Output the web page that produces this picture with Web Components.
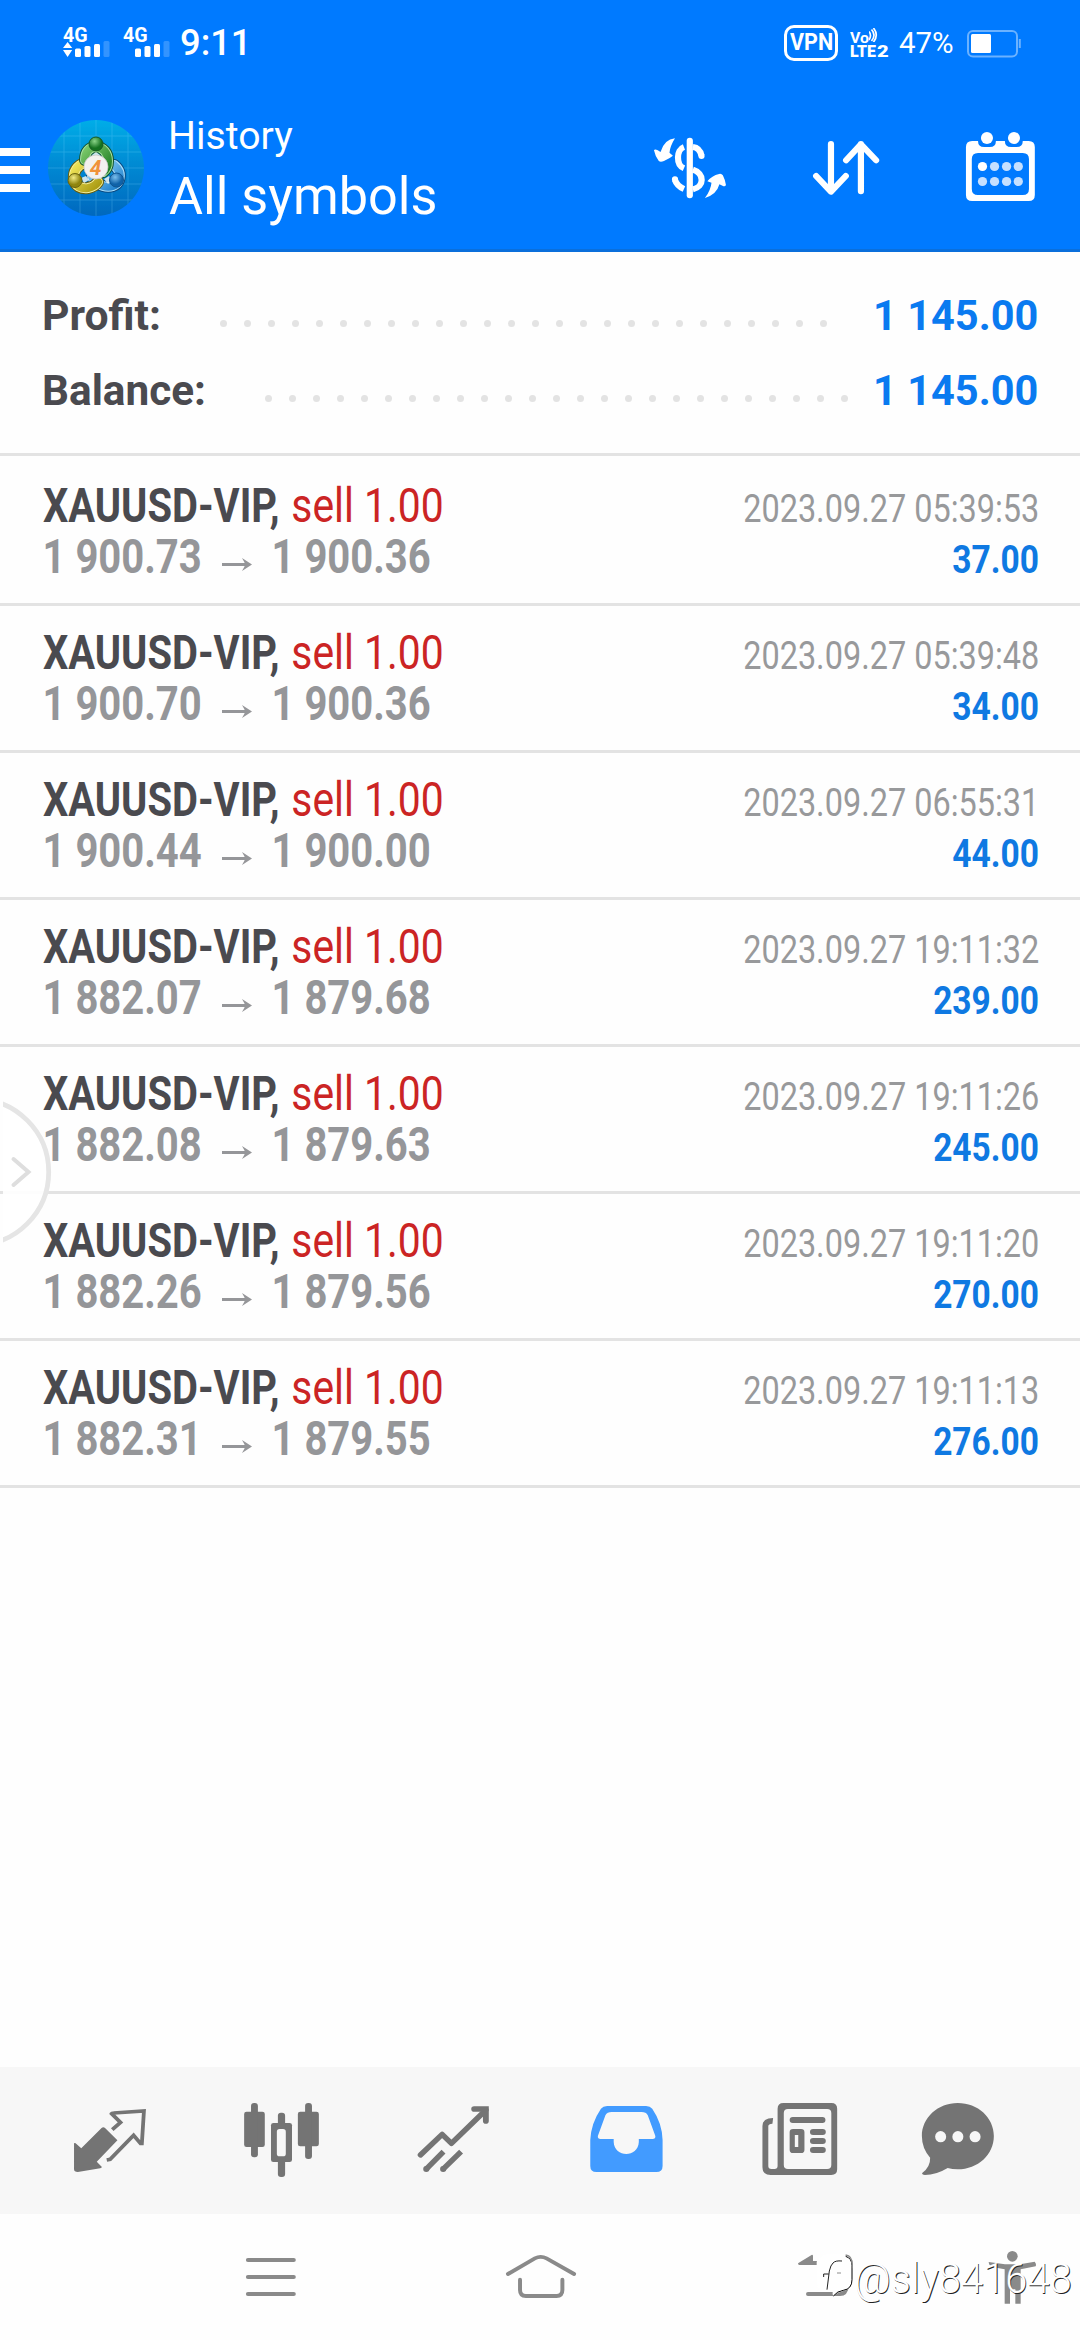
<!DOCTYPE html>
<html lang="en">
<head>
<meta charset="utf-8">
<title>History</title>
<style>
html,body{margin:0;padding:0;background:#fefefe}
body{width:1080px;height:2340px;overflow:hidden;font-family:Roboto,"Liberation Sans",sans-serif}
</style>
</head>
<body>
<history-app></history-app>
<script>
const FAMILY = 'Roboto, "Liberation Sans", sans-serif';
const pen = document.createElement('canvas').getContext('2d');

class BaseElement extends HTMLElement {
  render(html) {
    if (!this.shadowRoot) this.attachShadow({mode: 'open'});
    this.shadowRoot.innerHTML = html;
  }
}

/* A single line of text, scaled so that its ink (or that of the "like" sample) spans the given width. */
class FitText extends BaseElement {
  connectedCallback() {
    const w = +this.getAttribute('w'), size = this.getAttribute('size');
    const weight = this.getAttribute('weight') || 400, lh = this.getAttribute('lh') || size;
    const text = this.getAttribute('text');
    pen.font = `${weight} ${size}px ${FAMILY}`;
    const m = pen.measureText(this.getAttribute('like') || text);
    const k = w / (m.actualBoundingBoxLeft + m.actualBoundingBoxRight);
    this.render(`<style>
      :host{display:block;flex:none;width:${w}px;height:${lh}px;white-space:pre}
      span{display:inline-block;font:${weight} ${size}px/${lh}px ${FAMILY};transform-origin:0 0;
        transform:translateX(${m.actualBoundingBoxLeft * k}px) scaleX(${k})}
    </style><span></span>`);
    this.shadowRoot.querySelector('span').textContent = text;
  }
}
customElements.define('fit-text', FitText);

class StatusBar extends BaseElement {
  connectedCallback() {
    this.render(`<style>
      :host{display:flex;height:84px;padding:0 58.500px 0 63px;color:#fff;align-items:flex-start}
      .sig{position:relative;width:46px;height:30px;margin:28px 14px 0 0}
      .sig fit-text{position:absolute;left:0;top:-3px}
      .sig svg{display:block}
      .time{margin:24px auto 0 -2px}
      .vpn{box-sizing:border-box;width:54px;height:36px;border:3px solid #fff;border-radius:10px;display:flex;justify-content:center;align-items:center;margin-top:25px}
      .lte{display:flex;flex-direction:column;margin:28px 0 0 12px;width:38px;gap:0}
      .lte div{display:flex;height:14px;gap:1px;align-items:flex-start}
      .pct{margin:24px 14px 0 11px}
      .bat{margin-top:30px}
    </style>
    <div class="sig"><fit-text text="4G" w="24" size="20" weight="700" lh="20"></fit-text>
      <svg width="48" height="30" fill="#fff"><path d="M0 20l4.6-6 4.6 6zM0 22h9.2l-4.600 7z"/><rect x="12" y="20.500" width="6" height="8.500" rx="1.500"/><rect x="21.500" y="18" width="6" height="11" rx="1.500"/><rect x="31" y="16" width="6" height="13" rx="1.500"/><rect x="40.500" y="13" width="6" height="16" rx="1.500" opacity=".2"/></svg></div>
    <div class="sig"><fit-text text="4G" w="24" size="20" weight="700" lh="20"></fit-text>
      <svg width="48" height="30" fill="#fff"><rect x="12" y="20.500" width="6" height="8.500" rx="1.500"/><rect x="21.500" y="18" width="6" height="11" rx="1.500"/><rect x="31" y="16" width="6" height="13" rx="1.500"/><rect x="40.500" y="13" width="6" height="16" rx="1.500" opacity=".2"/></svg></div>
    <fit-text class="time" text="9:11" w="64" size="36" weight="500" lh="38"></fit-text>
    <div class="vpn"><fit-text text="VPN" w="42" size="23" weight="700" lh="24"></fit-text></div>
    <div class="lte"><div><fit-text text="Vo" w="18.500" size="15" weight="700" lh="14"></fit-text>
      <svg width="9" height="14" fill="none" stroke="#fff" stroke-width="1.700"><path d="M0 3.500q3 4 0 8.500M2.500 1.500q5 5.500 0 11.500M4.500 0q5.500 7 0 14"/></svg></div>
      <div><fit-text text="LTE" w="26" size="16" weight="900" lh="14"></fit-text><fit-text text="2" w="11" size="16.500" weight="900" lh="14"></fit-text></div></div>
    <fit-text class="pct" text="47%" w="54" size="29.500" lh="38"></fit-text>
    <svg class="bat" width="55" height="28"><rect x="1" y="1" width="49" height="25.500" rx="5" fill="none" stroke="#fff" stroke-width="2" opacity=".42"/><rect x="4" y="4" width="20" height="19" rx="1.500" fill="#fff"/><path d="M52.800 9v9" stroke="#fff" stroke-width="2" opacity=".42"/></svg>`);
  }
}
customElements.define('status-bar', StatusBar);

class AppLogo extends BaseElement {
  connectedCallback() {
    const arm = (d, dark, light, fill) => `<path d="${d}" stroke="${dark}" stroke-width="12"/><path d="${d}" stroke="${light}" stroke-width="10"/><path d="${d}" stroke="url(#${fill})" stroke-width="8"/>`;
    this.render(`<style>:host{display:block;width:98px;height:98px}svg{display:block}</style>
    <svg width="98" height="98" viewBox="0 0 98 98">
      <defs>
        <linearGradient id="sky" x1="0" y1="0" x2="0" y2="1"><stop offset="0" stop-color="#00aee8"/><stop offset=".5" stop-color="#0088d2"/><stop offset="1" stop-color="#0068be"/></linearGradient>
        <linearGradient id="g" x1="0" y1="0" x2="1" y2="1"><stop offset="0" stop-color="#7cc96a"/><stop offset="1" stop-color="#1f7d25"/></linearGradient>
        <linearGradient id="y" x1="0" y1="0" x2="1" y2="1"><stop offset="0" stop-color="#f3e75c"/><stop offset="1" stop-color="#a99a12"/></linearGradient>
        <linearGradient id="b" x1="0" y1="0" x2="1" y2="1"><stop offset="0" stop-color="#8fd3f8"/><stop offset="1" stop-color="#1e80cd"/></linearGradient>
        <radialGradient id="gh" cx=".4" cy=".3"><stop offset="0" stop-color="#8ad487"/><stop offset="1" stop-color="#157220"/></radialGradient>
        <radialGradient id="yh" cx=".4" cy=".3"><stop offset="0" stop-color="#f3eb86"/><stop offset="1" stop-color="#8f840e"/></radialGradient>
        <radialGradient id="bh" cx=".4" cy=".3"><stop offset="0" stop-color="#7cc0ee"/><stop offset="1" stop-color="#0f62a8"/></radialGradient>
        <clipPath id="c"><circle cx="49" cy="49" r="48"/></clipPath>
      </defs>
      <g clip-path="url(#c)"><rect width="98" height="98" fill="url(#sky)"/>
      <path d="M17 0v98M33 0v98M49 0v98M65 0v98M81 0v98M0 17h98M0 33h98M0 49h98M0 65h98M0 81h98" stroke="#7fd4ff" stroke-width=".8" opacity=".3"/></g>
      <g fill="none" stroke-linecap="round">
        ${arm('M67 46c5 4 7 9 5 15s-9 8-16 6-10-5-11-10', '#0b4a82', '#abe0fb', 'b')}
        ${arm('M38 44c-8 2-12 9-11 16s7 10 14 9c5-1 8-3 10-6', '#655d0c', '#f4ee9c', 'y')}
        ${arm('M38 41C38 33 42 28 49 28s12 6 12 14c0 5-2 9-5 11', '#12532b', '#a6dfa2', 'g')}
      </g>
      <path d="M45 36L49 33L53 36V38H45ZM34 59L39 57L42 61L37 64ZM57 60L62 57L65 62L61 65Z" fill="#eef6f4" opacity=".85"/>
      <circle cx="49" cy="25" r="7" fill="url(#gh)" stroke="#165a24"/>
      <circle cx="28" cy="61.500" r="7" fill="url(#yh)" stroke="#6d650f"/>
      <circle cx="69.500" cy="61" r="7" fill="url(#bh)" stroke="#0f5490"/>
      <circle cx="49" cy="48" r="12" fill="#f3f1f0" stroke="#c8c8c8" stroke-width=".8"/>
      <text x="48.500" y="55.500" text-anchor="middle" font-family="Roboto,sans-serif" font-style="italic" font-weight="700" font-size="21" fill="#f0923a">4</text>
    </svg>`);
  }
}
customElements.define('app-logo', AppLogo);

class AppBar extends BaseElement {
  connectedCallback() {
    this.render(`<style>
      :host{display:flex;height:165px;border-bottom:3px solid #0a6fdb;color:#fff;align-items:flex-start}
      svg{display:block;flex:none}
      .menu{margin-top:64px}
      app-logo{margin:35px 0 0 17px}
      .titles{display:flex;flex-direction:column;margin:29px auto 0 26px}
      .titles fit-text+fit-text{margin:8px 0 0 -2.500px}
      .acts{display:flex;width:440px;height:165px}
    </style>
    <svg class="menu" width="30" height="44" fill="#fff"><path d="M0 0h30v8H0zM0 18h30v8H0zM0 36h30v8H0z"/></svg>
    <app-logo></app-logo>
    <div class="titles"><fit-text text="History" w="122" size="39.500" lh="46"></fit-text><fit-text text="All symbols" w="266" size="51" lh="60"></fit-text></div>
    <div class="acts">
      <svg width="144" height="165" viewBox="290.400 252 418.200 495" preserveAspectRatio="none">
        <g fill="none" stroke="#fff" stroke-width="18"><path d="M435 422V586" stroke-linecap="round"/><path d="M418 441C396 449 394 495 418 505M444 441c16 2 22 12 25 26" /><path d="M469 468v0M392 538v0" stroke-linecap="round"/><path d="M444 509C478 520 478 560 444 568M418 567C402 560 396 552 392 540"/></g>
        <path fill="#fff" d="M392 415Q378 438 376 458L386 467Q377 475 360 483Q350 488 345 483Q335 471 331 451Q333 446 342 451L350 456Q361 418 392 415ZM479 594Q496 570 498 548L486 544Q499 527 520 522Q527 520 531 526Q538 540 540 555Q537 562 530 557L521 553Q513 584 479 594Z"/>
      </svg>
      <svg width="148" height="165" viewBox="708.600 252 429.800 495" preserveAspectRatio="none" fill="none" stroke="#fff" stroke-width="18" stroke-linecap="round" stroke-linejoin="round"><path d="M845 432V574M802 528L845 575L888 528M932 574V432M889 481L932 433L976 481"/></svg>
      <svg width="148" height="165" viewBox="1138.400 252 429.800 495" preserveAspectRatio="none">
        <path fill="#fff" fill-rule="evenodd" d="M1255 423H1272Q1272 441 1290 441H1306Q1324 441 1324 423H1350Q1350 441 1368 441H1384Q1402 441 1402 423H1419Q1437 423 1437 441V585Q1437 603 1419 603H1255Q1237 603 1237 585V441Q1237 423 1255 423ZM1272 459Q1254 459 1254 477V567Q1254 585 1272 585H1402Q1420 585 1420 567V477Q1420 459 1402 459Z"/>
        <g fill="#fff"><ellipse cx="1298" cy="414" rx="17.500" ry="18"/><ellipse cx="1376.500" cy="414" rx="17.500" ry="18"/><circle cx="1285" cy="499.500" r="13.500"/></g>
        <g fill="#c6e0ff"><circle cx="1320" cy="499.500" r="13.500"/><circle cx="1355" cy="499.500" r="13.500"/><circle cx="1389" cy="499.500" r="13.500"/><circle cx="1285" cy="544.500" r="13.500"/><circle cx="1320" cy="544.500" r="13.500"/><circle cx="1355" cy="544.500" r="13.500"/><circle cx="1389" cy="544.500" r="13.500"/></g>
      </svg>
    </div>`);
  }
}
customElements.define('app-bar', AppBar);

class SummaryRow extends BaseElement {
  connectedCallback() {
    const n = +this.getAttribute('dots');
    this.render(`<style>
      :host{display:flex;height:75px;padding:0 43px 0 44.200px;color:#4a4a4f}
      .dots{display:flex;justify-content:space-between;width:${(n - 1) * 24 + 7.5}px;margin:28.500px ${this.getAttribute('end')}px 0 auto}
      i{width:7.500px;height:7.500px;border-radius:50%;background:#e3e3e3}
      .v{color:#0a7af0}
    </style>
    <fit-text text="${this.getAttribute('label')}" w="${this.getAttribute('w')}" size="42.500" weight="700" lh="49"></fit-text>
    <div class="dots">${'<i></i>'.repeat(n)}</div>
    <fit-text class="v" text="${this.getAttribute('value')}" w="161" size="42.500" weight="700" lh="49"></fit-text>`);
  }
}
customElements.define('summary-row', SummaryRow);

class DealRow extends BaseElement {
  connectedCallback() {
    const a = n => this.getAttribute(n);
    const wide = a('profit').length > 5;
    this.render(`<style>
      :host{display:flex;justify-content:space-between;box-sizing:border-box;height:147px;border-bottom:3px solid #e3e3e3;padding:0 42.500px 0 42.500px}
      .l{padding-top:21px}.r{padding-top:24px;display:flex;flex-direction:column;align-items:flex-end}
      .a,.b{display:flex}
      .a fit-text{color:#4a4a4f}.a fit-text+fit-text{color:#cb2424;margin-left:15px}
      .b{color:#959699;padding-left:2px}
      svg{margin:27px 22px 0 21.500px}
      .d{color:#98999b}.p{color:#0f79e2}
    </style>
    <div class="l"><div class="a"><fit-text text="XAUUSD-VIP," w="235" size="48" weight="700" lh="51"></fit-text><fit-text text="sell 1.00" w="149" size="48" lh="51"></fit-text></div>
    <div class="b"><fit-text text="${a('open')}" like="1 900.70" w="155.500" size="48" weight="700" lh="51"></fit-text>
      <svg width="30" height="13" viewBox="0 0 30 13"><path d="M0 6.500H27" stroke="#959699" stroke-width="3" fill="none"/><path d="M20 0L30 6.500L20 13L22.500 8.500V4.500Z" fill="#959699"/></svg>
      <fit-text text="${a('close')}" like="1 900.00" w="155.500" size="48" weight="700" lh="51"></fit-text></div></div>
    <div class="r"><fit-text class="d" text="${a('date')}" like="2023.09.27 05:39:53" w="293.500" size="39.500" lh="51"></fit-text>
    <fit-text class="p" text="${a('profit')}" w="${wide ? 103.5 : 84.5}" size="39.500" weight="700" lh="51"></fit-text></div>`);
  }
}
customElements.define('deal-row', DealRow);

class EdgeHandle extends BaseElement {
  connectedCallback() {
    this.render(`<style>:host{display:block}svg{display:block}</style>
    <svg width="52" height="164" viewBox="3 1090 52 164"><circle cx="-24.300" cy="1172" r="73" fill="#fff" fill-opacity=".9" stroke="#e5e5e5" stroke-width="4.800"/><path d="M13.500 1159L28.500 1172L13.500 1185" fill="none" stroke="#dedede" stroke-width="4" stroke-linecap="round"/></svg>`);
  }
}
customElements.define('edge-handle', EdgeHandle);

class TabBar extends BaseElement {
  connectedCallback() {
    const tabs = [
      [69.7, `<path fill="#747474" d="M215 250Q218 247 222 252L236 265L295 204Q300 199 305 204L341 241L281 305L296 321Q295 324 291 325L226 336Q215 336 215 328Z"/><path fill="none" stroke="#747474" stroke-width="11" d="M326 209L350 187L324 161Q325 159 330 159L418 153L412 250L408 250L388 226L320 298L310 300"/>`],
      [569.2, `<g fill="#747474"><rect x="709" y="155" width="60" height="106" rx="7"/><rect x="729" y="129" width="20" height="163" rx="9"/><rect x="865" y="155" width="61" height="104" rx="7"/><rect x="886" y="129" width="20" height="168" rx="9"/><rect x="787" y="189" width="61" height="117" rx="7"/><rect x="807" y="158" width="21" height="193" rx="9"/></g><rect x="804" y="207" width="26" height="82" rx="8" fill="#f7f7f7"/>`],
      [1068.7, `<g fill="none" stroke="#747474" stroke-width="16"><path d="M1221 285L1284 223L1311 250L1411 150" stroke-linejoin="round" stroke-linecap="round"/><path d="M1377 147H1411V183" stroke-width="17" stroke-linecap="round"/><path d="M1237 328L1288 275M1286 328L1339 275"/></g><g fill="#747474"><circle cx="1238" cy="327" r="9"/><circle cx="1287" cy="327" r="9"/></g>`],
      [0, `<path fill="#429bff" fill-rule="evenodd" d="M195 138H308Q320 138 326 146Q355 190 356 240V318Q356 336 338 336H164Q146 336 146 318V240Q148 190 177 146Q183 138 195 138ZM208 156Q195 156 190 166L168 228Q167 237 176 237H214V246C216 294 285 294 287 246V237H327Q336 237 335 228L313 166Q308 156 295 156Z"/>`],
      [499.5, `<path fill="#747474" fill-rule="evenodd" d="M707 129H846Q863 129 863 146V328Q863 345 846 345H670Q646 345 646 322V198Q646 174 677 174L675 191Q663 192 663 198V318Q663 327 672 327H681Q690 327 690 318V146Q690 129 707 129ZM720 147Q708 147 708 159V315Q708 327 720 327H834Q846 327 846 315V159Q846 147 834 147Z"/><g fill="#747474"><rect x="725" y="171" width="104" height="18" rx="9"/><path fill-rule="evenodd" d="M735 207H758Q768 207 768 217V269Q768 279 758 279H735Q725 279 725 269V217Q725 207 735 207ZM740 225V261H750V225Z"/><rect x="784" y="207" width="46" height="18" rx="9"/><rect x="784" y="234" width="46" height="18" rx="9"/><rect x="784" y="261" width="46" height="18" rx="9"/></g>`],
      [999, `<path fill="#747474" d="M1213 129C1272 129 1318 173 1318 228C1318 284 1272 328 1213 328Q1197 328 1184 324Q1150 345 1118 345Q1108 344 1110 339Q1134 320 1133 293Q1109 265 1109 228C1109 173 1156 129 1213 129Z"/><g fill="#f7f7f7"><ellipse cx="1163.500" cy="230" rx="16" ry="17"/><ellipse cx="1213.500" cy="230" rx="16" ry="17"/><ellipse cx="1263.500" cy="230" rx="16" ry="17"/></g>`]];
    this.render(`<style>:host{display:flex;height:147px;padding:0 24px;background:#f7f7f7}svg{display:block}</style>
    ${tabs.map(([x, s]) => `<svg width="172" height="147" viewBox="${x} 21 499.500 441" preserveAspectRatio="none">${s}</svg>`).join('')}`);
  }
}
customElements.define('tab-bar', TabBar);

class SystemNav extends BaseElement {
  connectedCallback() {
    this.render(`<style>:host{display:flex;height:126px;background:#fefefe}svg{display:block;flex:none;overflow:visible}</style>
    <svg width="540" height="126" viewBox="0 462 1568 378" preserveAspectRatio="none" fill="none" stroke="#8a8a8a" stroke-width="12" stroke-linecap="round"><path d="M720 600H853M720 651H853M720 702H853"/><path d="M1475 642L1553 595Q1570 586 1587 595L1667 642M1510 659V690Q1510 708 1527 708H1616Q1633 708 1633 690V659" stroke-width="11.500"/></svg>
    <svg width="540" height="126" viewBox="-720 -78 1620 378">
      <g fill="#8a8a8a"><path d="M54 70L96 44Q99 44 99 48V63H180Q207 63 207 95V130Q207 168 180 168H84Q78 168 78 162Q78 156 84 156H176Q195 156 195 130V95Q195 75 180 75H58Q54 75 54 70Z"/>
      <circle cx="697" cy="49" r="16"/><path d="M626 66L675 73H720L764 65Q770 72 767 79L722 88V191H706V148H690V191H674V88L632 80Q626 74 626 66Z"/></g>
    </svg>`);
  }
}
customElements.define('system-nav', SystemNav);

class WatermarkTag extends BaseElement {
  connectedCallback() {
    this.render(`<style>:host{display:flex;align-items:flex-start;color:#fff}svg{display:block;flex:none}
      fit-text{text-shadow:.9px .9px 0 #222;margin-left:3px}</style>
    <svg width="39" height="50" viewBox="92 58 117 150"><path d="M100 84Q110 62 135 62H178Q206 64 206 92V140Q206 168 180 172Q162 176 150 187Q146 180 149 172H118Q100 164 100 148Z" fill="#fff"/><path d="M187 68Q206 74 206 96V138Q206 166 180 170Q162 172 150 187" fill="none" stroke="#000" stroke-width="3"/><path d="M187 64Q207 66 207 95V104" fill="none" stroke="#8a8a8a" stroke-width="4"/><path d="M176 82Q156 80 149 88Q142 94 138 112L131 168M121 130V121H136" fill="none" stroke="#000" stroke-width="2.600"/><path d="M161 118H173" stroke="#777" stroke-width="2.500"/></svg>
    <fit-text text="@sly841648" w="214" size="43" weight="300" lh="50"></fit-text>`);
  }
}
customElements.define('watermark-tag', WatermarkTag);

class HistoryApp extends BaseElement {
  connectedCallback() {
    const deals = [
      ['1 900.73', '1 900.36', '2023.09.27 05:39:53', '37.00'],
      ['1 900.70', '1 900.36', '2023.09.27 05:39:48', '34.00'],
      ['1 900.44', '1 900.00', '2023.09.27 06:55:31', '44.00'],
      ['1 882.07', '1 879.68', '2023.09.27 19:11:32', '239.00'],
      ['1 882.08', '1 879.63', '2023.09.27 19:11:26', '245.00'],
      ['1 882.26', '1 879.56', '2023.09.27 19:11:20', '270.00'],
      ['1 882.31', '1 879.55', '2023.09.27 19:11:13', '276.00']];
    this.render(`<style>
      :host{display:flex;flex-direction:column;position:relative;width:1080px;height:2340px;overflow:hidden}
      header{background:#007aff}
      .sum{box-sizing:border-box;height:204px;padding-top:39px;border-bottom:3px solid #e3e3e3}
      .list{flex:1;padding-top:3px}
      edge-handle{position:absolute;left:3px;top:1090px}
      watermark-tag{position:absolute;left:814px;top:2253px}
    </style>
    <header><status-bar></status-bar><app-bar></app-bar></header>
    <section class="sum"><summary-row label="Profit:" w="115" value="1 145.00" dots="26" end="49"></summary-row><summary-row label="Balance:" w="160" value="1 145.00" dots="25" end="28"></summary-row></section>
    <main class="list">${deals.map(d => `<deal-row open="${d[0]}" close="${d[1]}" date="${d[2]}" profit="${d[3]}"></deal-row>`).join('')}</main>
    <tab-bar></tab-bar><system-nav></system-nav>
    <edge-handle></edge-handle><watermark-tag></watermark-tag>`);
  }
}
customElements.define('history-app', HistoryApp);
</script>
</body>
</html>
